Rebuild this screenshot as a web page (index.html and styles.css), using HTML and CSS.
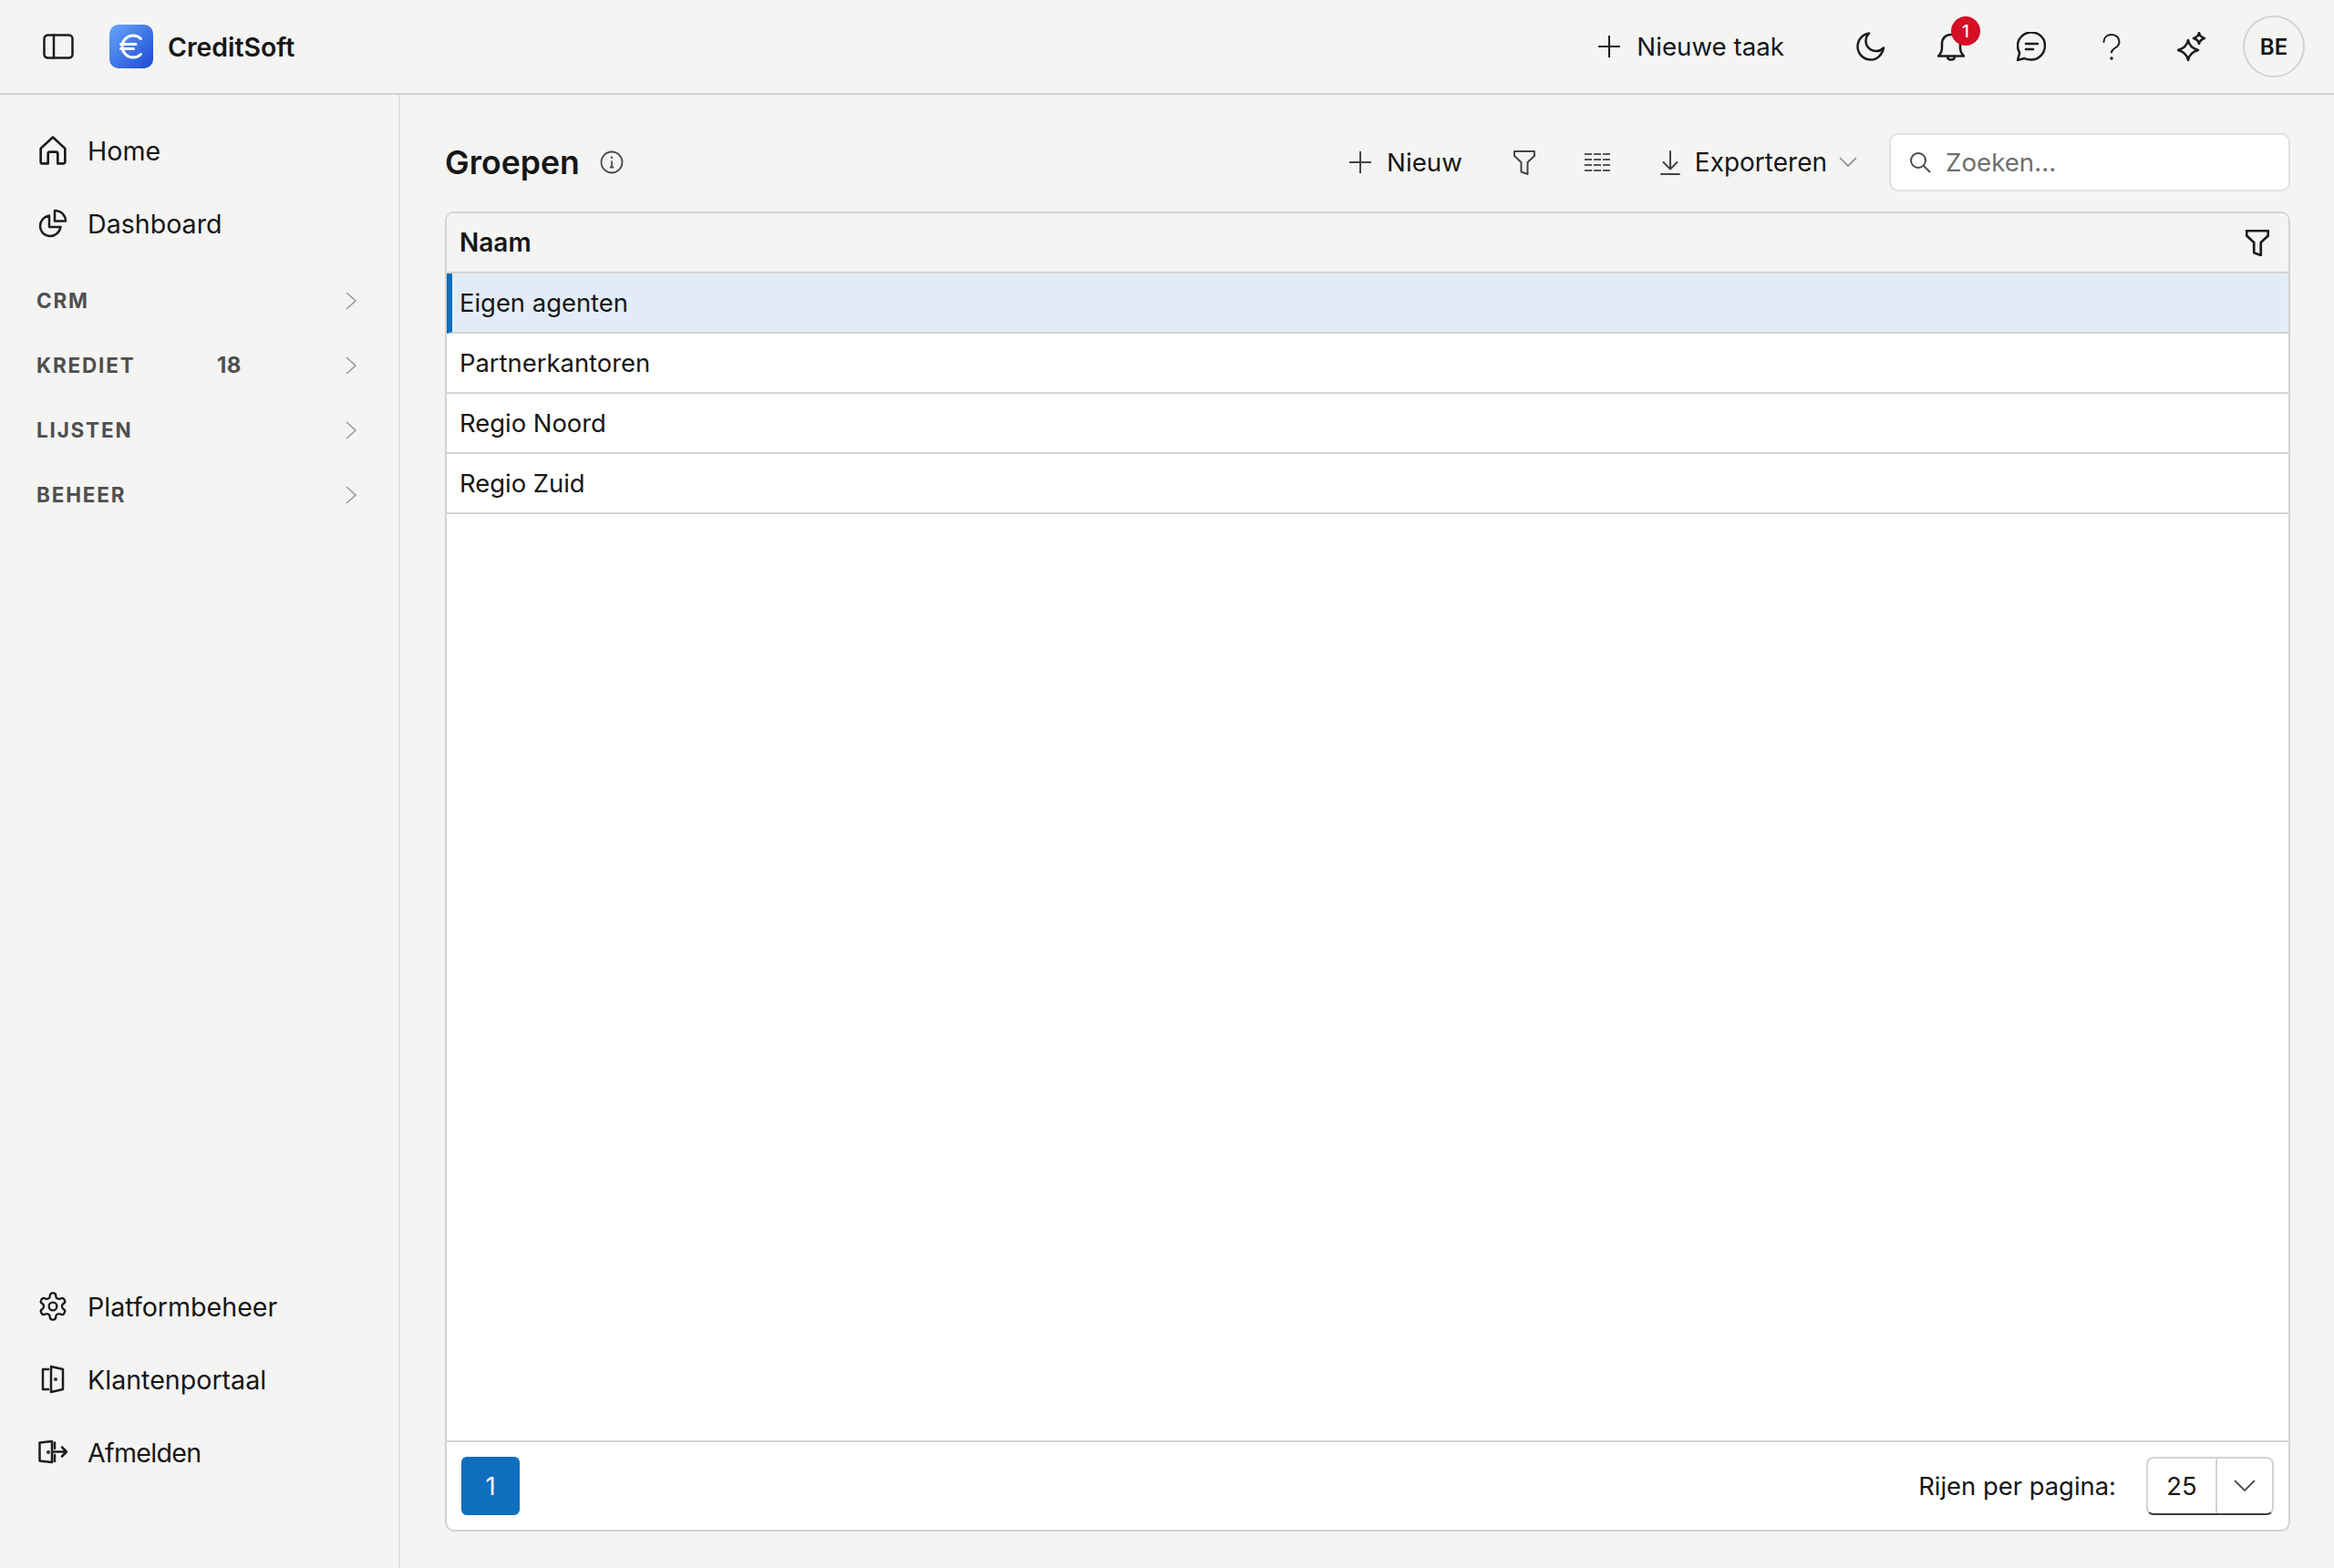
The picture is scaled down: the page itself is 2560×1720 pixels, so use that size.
FILE: index.html
```html
<!DOCTYPE html>
<html lang="nl">
<head>
    <meta charset="UTF-8">
    <title>Groepen - CreditSoft</title>
    <link rel="stylesheet" href="styles.css">
</head>
<body>
    <header class="topbar">
        <div class="topbar-left">
            <svg class="icon panel-icon" viewBox="0 0 34 28"><rect x="1.5" y="1.5" width="31" height="25" rx="4"/><path d="M12 1.5v25"/></svg>
            <svg class="logo" viewBox="0 0 48 48">
                <defs><linearGradient id="logoFill" x1="0" y1="0" x2="1" y2="1"><stop offset="0" stop-color="#66a6fb"/><stop offset="1" stop-color="#1c4ad4"/></linearGradient></defs>
                <rect width="48" height="48" rx="10" fill="url(#logoFill)"/>
                <path d="M34.5 15.5a12 12 0 1 0 0 17M12.500 21.500h16.500M12.500 26.500h14" fill="none" stroke="#fff" stroke-width="3" stroke-linecap="round"/>
            </svg>
            <span class="brand">CreditSoft</span>
        </div>
        <div class="topbar-right">
            <div class="new-task">
                <svg class="icon thin plus-icon" viewBox="0 0 24 24"><path d="M12 0v24M0 12h24"/></svg>
                <span>Nieuwe taak</span>
            </div>
            <div class="top-icons">
                <span class="top-icon"><svg class="icon" viewBox="0 0 32 32"><path d="M14 1.500C7 2.500 1.500 8.500 1.500 16 1.500 24 8 30.500 16 30.500 23 30.500 28.500 25 30 17.500 27.500 20 25 21 22 21 15 21 10.500 15.500 10.500 10 10.500 6.500 11.500 4 14 1.500z"/></svg></span>
                <span class="top-icon"><svg class="icon" viewBox="0 0 32 32"><path d="M2 26.500c2.500-2.500 4-4.500 4-9V13C6 7 10 3 16 3s10 4 10 10v4.500c0 4.500 1.500 6.500 4 9zM12 26.500c0 3 2 4 4 4s4-1 4-4"/></svg><span class="badge">1</span></span>
                <span class="top-icon"><svg class="icon" viewBox="1 1 32 32"><path d="M17 1.500C8.500 1.500 2 8.500 2 16c0 3 .7 5.500 2.200 8L2 32l7.500-2c2.200 1.200 4.700 1.500 7.500 1.500 8.500 0 15-7 15-15.500S25.500 1.500 17 1.500zM11 14h13M11 20h8"/></svg></span>
                <span class="top-icon"><svg class="icon thin" viewBox="0 0 32 32"><path d="M7.500 11C7.500 6 11 3 16 3s8.500 3.500 8.500 8c0 3.500-2 5-4.500 6.500-2.500 1.500-4 2.500-4 5"/><circle cx="16" cy="29" r=".8" class="dot"/></svg></span>
                <span class="top-icon"><svg class="icon" viewBox="0 0 32 32"><path d="M12 9c1 5.500 4 9 11 11-7 2-10 5.500-11 11-1-5.500-4-9-11-11 7-2 10-5.500 11-11zM24 1q1 4.500 6 6-5 1.500-6 6-1-4.500-6-6 5-1.500 6-6z"/></svg></span>
            </div>
            <div class="avatar">BE</div>
        </div>
    </header>

    <div class="layout">
        <aside class="sidebar">
            <nav>
                <a class="nav-link"><svg class="icon" viewBox="0 0 28 30"><path d="M1.500 13L14 1.500 26.500 13v14a1.500 1.500 0 0 1-1.500 1.500h-6V18.500a2 2 0 0 0-2-2h-6a2 2 0 0 0-2 2v10H3A1.500 1.500 0 0 1 1.500 27z"/></svg><span>Home</span></a>
                <a class="nav-link"><svg class="icon" viewBox="0 0 32 32"><path d="M12 7.500C6 8.500 2 13.500 2 19c0 6.500 5 11 11 11 5.500 0 10.500-4 11.500-10H12z"/><path d="M18 2v11.500h12C30 7 25 2 18 2z"/></svg><span>Dashboard</span></a>
                <div class="nav-groups">
                    <div class="nav-group"><span class="group-name">CRM</span><svg class="chevron" viewBox="0 0 12 20"><path d="M1 1l10 9-10 9"/></svg></div>
                    <div class="nav-group"><span class="group-name">KREDIET</span><span class="group-count">18</span><svg class="chevron" viewBox="0 0 12 20"><path d="M1 1l10 9-10 9"/></svg></div>
                    <div class="nav-group"><span class="group-name">LIJSTEN</span><svg class="chevron" viewBox="0 0 12 20"><path d="M1 1l10 9-10 9"/></svg></div>
                    <div class="nav-group"><span class="group-name">BEHEER</span><svg class="chevron" viewBox="0 0 12 20"><path d="M1 1l10 9-10 9"/></svg></div>
                </div>
            </nav>
            <nav>
                <a class="nav-link"><svg class="icon gear-icon" viewBox="1 1 22 22"><path d="M12.220 2h-.44a2 2 0 0 0-2 2v.18a2 2 0 0 1-1 1.730l-.43.25a2 2 0 0 1-2 0l-.15-.08a2 2 0 0 0-2.730.73l-.22.38a2 2 0 0 0 .73 2.730l.15.1a2 2 0 0 1 1 1.720v.51a2 2 0 0 1-1 1.740l-.15.09a2 2 0 0 0-.73 2.730l.22.38a2 2 0 0 0 2.730.73l.15-.08a2 2 0 0 1 2 0l.43.25a2 2 0 0 1 1 1.730V20a2 2 0 0 0 2 2h.44a2 2 0 0 0 2-2v-.18a2 2 0 0 1 1-1.730l.43-.25a2 2 0 0 1 2 0l.15.08a2 2 0 0 0 2.730-.73l.22-.39a2 2 0 0 0-.73-2.730l-.15-.08a2 2 0 0 1-1-1.740v-.5a2 2 0 0 1 1-1.740l.15-.09a2 2 0 0 0 .73-2.730l-.22-.38a2 2 0 0 0-2.730-.73l-.15.08a2 2 0 0 1-2 0l-.43-.25a2 2 0 0 1-1-1.730V4a2 2 0 0 0-2-2z"/><circle cx="12" cy="12" r="3"/></svg><span>Platformbeheer</span></a>
                <a class="nav-link"><svg class="icon" viewBox="0 0 32 32"><path d="M11 5H5v22h6M14 2l13 3v22l-13 3z"/><circle cx="19" cy="16" r=".7" class="dot"/></svg><span>Klantenportaal</span></a>
                <a class="nav-link logout"><svg class="icon" viewBox="0 0 32 32"><path d="M15 4L1.500 5.500v20L15 27zM18 5.500V12M18 19v7M16 15.500h15M26 10.500l5 5-5 5"/><circle cx="11" cy="16" r=".7" class="dot"/></svg><span>Afmelden</span></a>
            </nav>
        </aside>

        <main class="content">
            <div class="page-head">
                <div class="page-title">
                    <h1>Groepen</h1>
                    <svg class="info-icon" viewBox="0 0 26 26"><circle cx="13" cy="13" r="11.500"/><path d="M13 11.500v7M10.800 18.500h4.400"/><circle cx="13" cy="7.800" r="1.200" class="dot"/></svg>
                </div>
                <div class="toolbar">
                    <button class="tool-btn new-btn"><svg class="icon tool-line plus-icon" viewBox="0 0 24 24"><path d="M12 0v24M0 12h24"/></svg>Nieuw</button>
                    <svg class="icon tool-line tool-filter" viewBox="0 0 24 27"><path d="M1 1h22v5l-7.500 7v13l-7-2.500V13L1 6z"/></svg>
                    <svg class="columns-icon" viewBox="0 0 28 20"><path d="M0 1h8M10 1h8M20 1h8M0 7h8M10 7h8M20 7h8M0 13h8M10 13h8M20 13h8M0 19h8M10 19h8M20 19h8"/></svg>
                    <button class="tool-btn export-btn"><svg class="icon tool-line export-icon" viewBox="0 0 22 27"><path d="M11 1v19M3.500 13l7.500 7.500 7.500-7.500M1 26h20"/></svg>Exporteren<svg class="export-caret" viewBox="0 0 20 12"><path d="M1 1l9 9 9-9"/></svg></button>
                    <div class="search">
                        <svg class="search-icon" viewBox="0 0 24 24"><circle cx="10" cy="10" r="8"/><path d="M16 16l7 7"/></svg>
                        <span>Zoeken...</span>
                    </div>
                </div>
            </div>

            <section class="grid">
                <div class="grid-head">
                    <span>Naam</span>
                    <svg class="icon head-filter" viewBox="0 0 24 27"><path d="M1 1h22v5l-7.500 7v13l-7-2.500V13L1 6z"/></svg>
                </div>
                <div class="grid-row selected">Eigen agenten</div>
                <div class="grid-row">Partnerkantoren</div>
                <div class="grid-row">Regio Noord</div>
                <div class="grid-row">Regio Zuid</div>
                <div class="grid-fill"></div>
                <div class="grid-foot">
                    <button class="page-btn">1</button>
                    <div class="page-size">
                        <span>Rijen per pagina:</span>
                        <div class="size-select">
                            <span class="size-value">25</span>
                            <span class="size-arrow"><svg viewBox="0 0 24 14"><path d="M1 1l11 11L23 1"/></svg></span>
                        </div>
                    </div>
                </div>
            </section>
        </main>
    </div>
</body>
</html>
```

FILE: styles.css
```css
* {
    box-sizing: border-box;
}

body {
    margin: 0;
    height: 1720px;
    background: #f4f4f3;
    color: #161616;
    font-family: Inter, "Noto Sans", sans-serif;
    font-size: 28px;
    display: flex;
    flex-direction: column;
    overflow: hidden;
}

.icon {
    fill: none;
    stroke: #1c1c1c;
    stroke-width: 2.5;
    stroke-linejoin: round;
    stroke-linecap: round;
    flex-shrink: 0;
}

.icon.thin {
    stroke-width: 2;
}

.icon.tool-line {
    stroke: #444;
    stroke-width: 2;
}

.icon .dot {
    fill: #1c1c1c;
}

/* top bar */
.topbar {
    height: 104px;
    flex-shrink: 0;
    border-bottom: 2px solid #d3d3d2;
    display: flex;
    justify-content: space-between;
    align-items: center;
    padding: 0 32px 0 47px;
}

.topbar-left {
    display: flex;
    align-items: center;
}

.panel-icon {
    width: 34px;
    height: 28px;
    margin-right: 39px;
}

.logo {
    width: 48px;
    height: 48px;
    margin-right: 16px;
}

.brand {
    font-size: 28.4px;
    font-weight: 600;
}

.topbar-right {
    display: flex;
    align-items: center;
}

.new-task {
    display: flex;
    align-items: center;
    gap: 18px;
    margin-right: 79px;
    font-size: 27.7px;
}

.plus-icon {
    width: 24px;
    height: 24px;
}

.top-icons {
    display: flex;
    align-items: center;
    gap: 56px;
    margin-right: 40px;
}

.top-icon {
    position: relative;
    width: 32px;
    height: 32px;
    display: block;
}

.top-icon .icon {
    width: 32px;
    height: 32px;
    display: block;
}

.badge {
    position: absolute;
    top: -17px;
    left: 16px;
    width: 32px;
    height: 32px;
    border-radius: 50%;
    background: #d50f25;
    color: #fff;
    font-size: 19px;
    font-weight: 500;
    display: flex;
    align-items: center;
    justify-content: center;
}

.avatar {
    width: 68px;
    height: 68px;
    border: 2px solid #d3d3d2;
    border-radius: 50%;
    font-size: 24px;
    font-weight: 600;
    display: flex;
    align-items: center;
    justify-content: center;
}

/* sidebar */
.layout {
    flex: 1;
    display: flex;
    min-height: 0;
}

.sidebar {
    width: 439px;
    flex-shrink: 0;
    border-right: 2px solid #dcdfe2;
    padding: 21px 40px 87px 40px;
    display: flex;
    flex-direction: column;
    justify-content: space-between;
}

.nav-link {
    height: 80px;
    display: flex;
    align-items: center;
    gap: 22px;
    font-size: 28.6px;
}

.nav-link .icon {
    width: 32px;
    height: 32px;
    margin-left: 2px;
}

.nav-link .gear-icon {
    stroke-width: 1.600;
}

.logout span {
    letter-spacing: -0.7px;
}

.nav-groups {
    margin-top: 9px;
}

.nav-group {
    height: 71px;
    display: flex;
    align-items: center;
    color: #4f4f4f;
    font-size: 22.5px;
    font-weight: 700;
    letter-spacing: 1.8px;
}

.group-name {
    width: 198px;
}

.group-count {
    font-size: 24px;
    letter-spacing: 0.5px;
}

.chevron {
    width: 12px;
    height: 20px;
    margin-left: auto;
    margin-right: 6px;
    fill: none;
    stroke: #9a9a9a;
    stroke-width: 1.600;
}

/* main */
.content {
    flex: 1;
    min-width: 0;
    display: flex;
    flex-direction: column;
    padding: 40px 48px 40px 49px;
}

.page-head {
    height: 88px;
    flex-shrink: 0;
    display: flex;
    justify-content: space-between;
    align-items: flex-start;
}

.page-title {
    height: 68px;
    display: flex;
    align-items: center;
    gap: 22px;
}

.page-title h1 {
    margin: 0;
    font-size: 35.6px;
    font-weight: 600;
}

.info-icon {
    width: 26px;
    height: 26px;
    fill: none;
    stroke: #4c4c4c;
    stroke-width: 1.800;
}

.info-icon .dot {
    fill: #4c4c4c;
    stroke: none;
}

.toolbar {
    display: flex;
    align-items: center;
    height: 64px;
    margin-top: 2px;
}

.tool-btn {
    border: none;
    background: none;
    padding: 0;
    font: inherit;
    color: inherit;
    display: flex;
    align-items: center;
}

.new-btn {
    gap: 17px;
    font-size: 27.7px;
}

.tool-filter {
    width: 24px;
    height: 27px;
    margin-left: 56px;
}

.columns-icon {
    width: 28px;
    height: 20px;
    margin-left: 54px;
    fill: none;
    stroke: #555;
    stroke-width: 2;
}

.export-btn {
    margin-left: 55px;
}

.export-icon {
    width: 22px;
    height: 27px;
    margin-right: 16px;
}

.export-caret {
    width: 20px;
    height: 12px;
    margin-left: 13px;
    fill: none;
    stroke: #8a8a8a;
    stroke-width: 1.600;
}

.search {
    width: 440px;
    height: 64px;
    margin-left: 35px;
    background: #fff;
    border: 2px solid #dfe2e5;
    border-radius: 10px;
    display: flex;
    align-items: center;
    padding-left: 20px;
    gap: 16px;
    color: #6f6f6f;
    font-size: 27.7px;
}

.search-icon {
    width: 24px;
    height: 24px;
    fill: none;
    stroke: #4c4c4c;
    stroke-width: 2;
}

/* table */
.grid {
    flex: 1;
    min-height: 0;
    display: flex;
    flex-direction: column;
    background: #fff;
    border: 2px solid #d3d3d2;
    border-radius: 10px;
    overflow: hidden;
    font-size: 27.4px;
}

.grid-head {
    height: 66px;
    flex-shrink: 0;
    background: #f4f4f3;
    border-bottom: 2px solid #d3d3d2;
    display: flex;
    justify-content: space-between;
    align-items: center;
    padding: 0 21px 0 14px;
    font-size: 28px;
    font-weight: 600;
}

.head-filter {
    width: 26px;
    height: 29px;
}

.grid-row {
    height: 66px;
    flex-shrink: 0;
    border-bottom: 2px solid #d3d3d2;
    display: flex;
    align-items: center;
    padding-left: 14px;
}

.grid-row.selected {
    background: #e2ecf7;
    padding-left: 8px;
    border-left: 6px solid #106ebe;
}

.grid-fill {
    flex: 1;
}

.grid-foot {
    height: 98px;
    flex-shrink: 0;
    border-top: 2px solid #d3d3d2;
    display: flex;
    justify-content: space-between;
    align-items: center;
    padding: 0 16px;
}

.page-btn {
    width: 64px;
    height: 64px;
    border: none;
    border-radius: 6px;
    background: #106ebe;
    color: #fff;
    font: inherit;
}

.page-size {
    display: flex;
    align-items: center;
    gap: 33px;
}

.size-select {
    width: 140px;
    height: 64px;
    display: flex;
    border: 2px solid #d3d3d2;
    border-bottom-color: #3d3d3d;
    border-radius: 8px;
}

.size-value {
    width: 76px;
    display: flex;
    align-items: center;
    justify-content: center;
    border-right: 2px solid #d3d3d2;
}

.size-arrow {
    flex: 1;
    display: flex;
    align-items: center;
    justify-content: center;
}

.size-arrow svg {
    width: 24px;
    height: 14px;
    fill: none;
    stroke: #4c4c4c;
    stroke-width: 1.800;
}
```
